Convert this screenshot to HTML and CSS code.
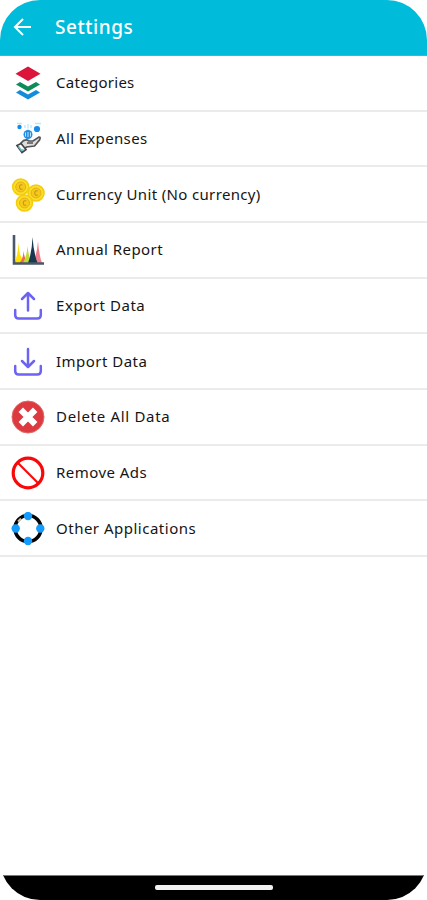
FILE: index.html
```html
<!DOCTYPE html>
<html lang="en">
<head>
<meta charset="utf-8">
<meta name="viewport" content="width=device-width, initial-scale=1">
<title>Settings</title>
<link rel="stylesheet" href="styles.css">
</head>
<body>
<div class="phone">
  <header class="bar">
    <svg class="back" viewBox="0 0 20 20"><path d="M18 10H2.500M10 2L2 10l8 8"/></svg>
    <h1>Settings</h1>
  </header>
  <ul class="list">
    <li>
      <svg class="icon" viewBox="0 0 34 34">
        <path fill="#138cdc" d="M5 26.500l4-2.500 8 4.500 8-4.500 4 2.500-12 7z"/>
        <path fill="#0d8b58" d="M5 18.500l4-2.500 8 4.500 8-4.500 4 2.500-12 7z"/>
        <path fill="#dc143c" d="M17 .5l12.500 7.200L17 15 4.500 7.700z"/>
      </svg>
      <span class="t-categories">Categories</span>
    </li>
    <li>
      <svg class="icon" viewBox="0 0 34 34">
        <g fill="none" stroke="#b5e9fb" stroke-width="1.300"><path d="M6 1.500h5M14 3v3M17 2v4M20 3v3M24 1.500h6M17 6.500v3"/></g>
        <circle cx="8.500" cy="5" r="2.200" fill="#168bea"/>
        <circle cx="26" cy="7" r="3.100" fill="#168bea"/>
        <circle cx="17" cy="12.500" r="4.500" fill="#208de4"/>
        <path d="M17 10v5M14.500 10.500v4M19.500 10.500v4" stroke="#bce5fd"/>
        <path d="M10 21q4-5 8-2h4l6-4q2 0 .5 3l-5 6-8 1-4 3z" fill="#ddd" stroke="#555" stroke-width="1.700"/>
        <path d="M16 21h6" stroke="#555" stroke-width="1.300"/>
        <path d="M6 23.500l4-2 5 6-4 3z" fill="#fff" stroke="#444" stroke-width="1.700"/>
        <path d="M7.500 24.500l3 4 2-1" fill="none" stroke="#67bbd0" stroke-width="1.500"/>
      </svg>
      <span class="t-expenses">All Expenses</span>
    </li>
    <li>
      <svg class="icon" viewBox="0 0 34 34">
        <g fill="#fce027" stroke="#f3cc10" stroke-width="1.600">
          <circle cx="9.700" cy="9" r="8"/><circle cx="25" cy="15" r="8"/><circle cx="13.500" cy="25" r="8"/>
        </g>
        <g fill="#f5cb18" stroke="#e0a51b" stroke-width=".8">
          <circle cx="9.700" cy="9" r="5"/><circle cx="25" cy="15" r="5"/><circle cx="13.500" cy="25" r="5"/>
        </g>
        <g fill="none" stroke="#c89122" stroke-width="1.100">
          <path d="M11.500 7q-3-1-3 2t3 2M26.800 13q-3-1-3 2t3 2M15.300 23q-3-1-3 2t3 2"/>
        </g>
      </svg>
      <span class="t-currency">Currency Unit (No currency)</span>
    </li>
    <li>
      <svg class="icon" viewBox="0 0 34 34">
        <path fill="#ffe000" d="M3.500 30Q7 22 7.500 9Q8 22 11 25l2 5z"/>
        <path fill="#e76c53" d="M8 30q4-3 4.500-12q1 8 4 12z"/>
        <path fill="#c0dc32" d="M12 30q4-7 4.500-17q1 10 4 17z"/>
        <path fill="#f27e8c" d="M22 30q4-9 5-22q1 14 4 22z"/>
        <path fill="#17394f" d="M17 30q4-11 4.500-26q1 15 5 26z"/>
        <path d="M3 2v28.500h30" fill="none" stroke="#49586a" stroke-width="2.600"/>
      </svg>
      <span class="t-report">Annual Report</span>
    </li>
    <li>
      <svg class="icon line" viewBox="0 0 34 34"><path d="M4.200 21v5q0 3.500 3.500 3.500h18.600q3.500 0 3.500-3.500v-5M17 21.500V4.500M11 10l6-6 6 6"/></svg>
      <span class="t-export">Export Data</span>
    </li>
    <li>
      <svg class="icon line" viewBox="0 0 34 34"><path d="M4.200 21v5q0 3.500 3.500 3.500h18.600q3.500 0 3.500-3.500v-5M17 4v17.500M11 16l6 6 6-6"/></svg>
      <span class="t-import">Import Data</span>
    </li>
    <li>
      <svg class="icon" viewBox="0 0 34 34">
        <circle cx="17" cy="17" r="16" fill="#dc3a40" stroke="#df6b65"/>
        <path d="M9.800 9.800l14.400 14.400M24.200 9.800l-14.400 14.400" stroke="#fff" stroke-width="6.300"/>
      </svg>
      <span class="t-delete">Delete All Data</span>
    </li>
    <li>
      <svg class="icon" viewBox="0 0 34 34" fill="none" stroke="#f80808">
        <circle cx="17" cy="17" r="14.800" stroke-width="3.200"/><path d="M7 7l20 20" stroke-width="2.200"/>
      </svg>
      <span class="t-ads">Remove Ads</span>
    </li>
    <li>
      <svg class="icon" viewBox="0 0 34 34">
        <circle cx="17" cy="16.500" r="13" fill="none" stroke="#050505" stroke-width="3.600"/>
        <path d="M7 9.500l3-3" stroke="#cbbca8" stroke-width="2"/>
        <g fill="#149bfc"><circle cx="17" cy="4" r="4.200"/><circle cx="29.300" cy="16.500" r="4.200"/><circle cx="17" cy="29" r="4.200"/><circle cx="4.700" cy="16.500" r="4.200"/></g>
      </svg>
      <span class="t-apps">Other Applications</span>
    </li>
  </ul>
  <footer class="nav"><div class="pill"></div></footer>
</div>
</body>
</html>
```
FILE: styles.css
```css
* { box-sizing: border-box; }
body { margin: 0; background: #fff; }
.phone {
  height: 900px;
  display: flex;
  flex-direction: column;
  overflow: hidden;
  border-radius: 40px;
  background: #fff;
  font-family: "Noto Sans", sans-serif;
  color: #151515;
}
.bar {
  height: 56px;
  flex: none;
  display: flex;
  align-items: center;
  padding: 0 0 1px 13px;
  background: #00bcda;
  border-bottom: 1px solid #55aebd;
  color: #fff;
}
.back { width: 20px; height: 20px; margin-right: 22px; fill: none; stroke: #fff; stroke-width: 2; }
h1 { margin: 0; font-size: 19px; font-weight: 500; line-height: 28px; letter-spacing: .55px; }
.list { flex: 1; margin: 0; padding: 0; list-style: none; }
.list li {
  height: 55.67px;
  display: flex;
  align-items: center;
  gap: 11px;
  padding: 0 0 1px 11px;
  border-bottom: 2px solid #ebebeb;
  font-size: 15px;
  line-height: 22px;
  white-space: nowrap;
}
.icon { width: 34px; height: 34px; flex: none; margin-top: 2px; }
.line { fill: none; stroke: #6c63f3; stroke-width: 2.500; stroke-linecap: round; stroke-linejoin: round; }
.t-categories { letter-spacing: .28px; }
.t-expenses { letter-spacing: .35px; }
.t-currency { letter-spacing: .35px; }
.t-report { letter-spacing: .45px; }
.t-export { letter-spacing: .55px; }
.t-import { letter-spacing: .47px; }
.t-delete { letter-spacing: .7px; }
.t-ads { letter-spacing: .45px; }
.t-apps { letter-spacing: .5px; }
.nav {
  height: 25px;
  flex: none;
  display: flex;
  justify-content: center;
  align-items: center;
  background: #000;
  border-top: 1px solid #777;
}
.pill { width: 118px; height: 5px; margin-bottom: 2px; border-radius: 2px; background: #f2f2f2; }
```
